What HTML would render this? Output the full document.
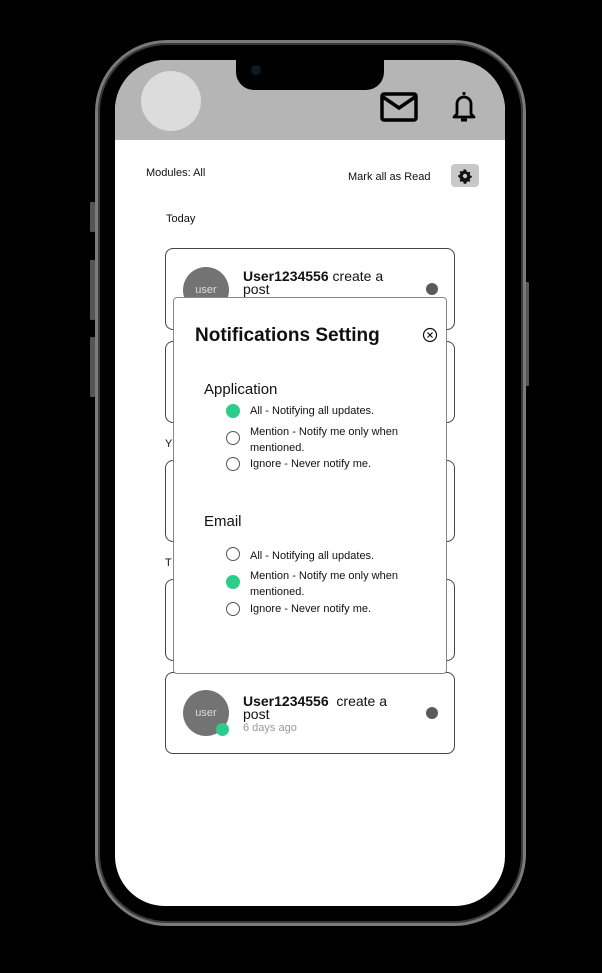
<!DOCTYPE html>
<html><head><style>
*{margin:0;padding:0;box-sizing:border-box}
body{width:602px;height:973px;background:#000;position:relative;overflow:hidden;font-family:"Liberation Sans",sans-serif;color:#111}
.a{position:absolute}
.frame{left:95px;top:40px;width:431px;height:886px;border-radius:72px;border:3px solid #7a7a76;background:#000;box-shadow:inset 0 0 0 2px #3a3a38}
.screen{left:115px;top:60px;width:390px;height:846px;border-radius:50px;background:#fff;overflow:hidden}
.hdr{left:0;top:0;width:390px;height:80px;background:#b5b5b5}
.notch{left:121px;top:0;width:148px;height:30px;background:#000;border-radius:0 0 18px 18px}
.card{border:1px solid #444;border-radius:8px;background:#fff;width:290px;height:82px}
.av{width:46px;height:46px;border-radius:50%;background:#737373;color:#ddd;font-size:11px;text-align:center;line-height:46px}
.dot{width:12px;height:12px;border-radius:50%;background:#5a5a5a}
.radio{width:14px;height:14px;border-radius:50%;border:1px solid #555;background:#fff}
.on{background:#2ecc8a;border-color:#2ecc8a}
.opt{font-size:11px;line-height:16px}
</style></head><body>
<div class="a" style="left:90px;top:202px;width:5px;height:30px;background:#555;border-radius:1px"></div>
<div class="a" style="left:90px;top:260px;width:5px;height:60px;background:#555;border-radius:1px"></div>
<div class="a" style="left:90px;top:337px;width:5px;height:60px;background:#555;border-radius:1px"></div>
<div class="a" style="left:525px;top:282px;width:4px;height:104px;background:#555;border-radius:1px"></div>
<div class="a frame"></div>
<div class="a screen">
 <div class="a hdr"></div>
 <div class="a notch"></div>
 <div class="a" style="left:136px;top:5px;width:10px;height:10px;border-radius:50%;background:#0d1a24"></div>
 <div class="a" style="left:26px;top:11px;width:60px;height:60px;border-radius:50%;background:#dcdcdc"></div>
 <svg class="a" style="left:265px;top:32px" width="38" height="30" viewBox="0 0 38 30"><rect x="2" y="2" width="34" height="26" rx="2" fill="none" stroke="#000" stroke-width="3.5"/><path d="M3 5 L19 16 L35 5" fill="none" stroke="#000" stroke-width="3.5"/></svg>
 <svg class="a" style="left:334px;top:30px" width="30" height="34" viewBox="0 0 30 34"><path d="M15 2v3M8 24V14a7 7 0 0 1 14 0v10l3 3H5z" fill="none" stroke="#000" stroke-width="2.8" stroke-linejoin="round"/><path d="M12 30h6" stroke="#000" stroke-width="3"/></svg>
 <div class="a" style="left:31px;top:107px;font-size:11px">Modules: All</div>
 <div class="a" style="left:233px;top:111px;font-size:11px">Mark all as Read</div>
 <div class="a" style="left:336px;top:104px;width:28px;height:23px;border-radius:4px;background:#c8c8c8"></div>
 <svg class="a" style="left:342px;top:108px" width="16" height="16" viewBox="0 0 16 16"><path d="M8 1.5l1.3.3.3 1.6 1.3.8 1.5-.6.9 1-.6 1.5.6 1.4 1.5.5v1.5l-1.5.5-.6 1.4.6 1.5-.9 1-1.5-.6-1.3.8-.3 1.6H6.7l-.3-1.6-1.3-.8-1.5.6-.9-1 .6-1.5-.6-1.4L1.2 8.7V7.3l1.5-.5.6-1.4-.6-1.5.9-1 1.5.6 1.3-.8.3-1.6z" fill="#111"/><circle cx="8" cy="8" r="2.2" fill="#c8c8c8"/></svg>
 <div class="a" style="left:51px;top:153px;font-size:11px">Today</div>
 <div class="a card" style="left:50px;top:188px"></div>
 <div class="a av" style="left:68px;top:207px">user</div>
 <div class="a" style="left:128px;top:210px;font-size:14px;line-height:13px"><b>User1234556</b> create a<br>post</div>
 <div class="a dot" style="left:311px;top:223px"></div>
 <div class="a card" style="left:50px;top:281px"></div>
 <div class="a" style="left:50px;top:378px;font-size:11px">Y</div>
 <div class="a card" style="left:50px;top:400px"></div>
 <div class="a" style="left:50px;top:497px;font-size:11px">T</div>
 <div class="a card" style="left:50px;top:519px"></div>
 <div class="a card" style="left:50px;top:612px"></div>
 <div class="a av" style="left:68px;top:630px">user</div>
 <div class="a" style="left:101px;top:663px;width:13px;height:13px;border-radius:50%;background:#2ecc8a"></div>
 <div class="a" style="left:128px;top:635px;font-size:14px;line-height:13px"><b>User1234556</b>&nbsp; create a<br>post</div>
 <div class="a" style="left:128px;top:662px;font-size:11px;color:#999">6 days ago</div>
 <div class="a dot" style="left:311px;top:647px"></div>
 <div class="a" style="left:58px;top:237px;width:274px;height:377px;border:1px solid #888;border-radius:4px;background:#fff"></div>
 <div class="a" style="left:80px;top:265px;font-size:19px;font-weight:bold">Notifications Setting</div>
 <svg class="a" style="left:307px;top:267px" width="16" height="16" viewBox="0 0 16 16"><circle cx="8" cy="8" r="6.5" fill="none" stroke="#111" stroke-width="1.2"/><path d="M5.5 5.5l5 5M10.5 5.5l-5 5" stroke="#111" stroke-width="1.2"/></svg>
 <div class="a" style="left:89px;top:321px;font-size:15px">Application</div>
 <div class="a radio on" style="left:111px;top:344px"></div>
 <div class="a opt" style="left:135px;top:343px">All - Notifying all updates.</div>
 <div class="a radio" style="left:111px;top:371px"></div>
 <div class="a opt" style="left:135px;top:364px">Mention - Notify me only when<br>mentioned.</div>
 <div class="a radio" style="left:111px;top:397px"></div>
 <div class="a opt" style="left:135px;top:396px">Ignore - Never notify me.</div>
 <div class="a" style="left:89px;top:453px;font-size:15px">Email</div>
 <div class="a radio" style="left:111px;top:487px"></div>
 <div class="a opt" style="left:135px;top:488px">All - Notifying all updates.</div>
 <div class="a radio on" style="left:111px;top:515px"></div>
 <div class="a opt" style="left:135px;top:508px">Mention - Notify me only when<br>mentioned.</div>
 <div class="a radio" style="left:111px;top:542px"></div>
 <div class="a opt" style="left:135px;top:541px">Ignore - Never notify me.</div>
</div>
</body></html>
